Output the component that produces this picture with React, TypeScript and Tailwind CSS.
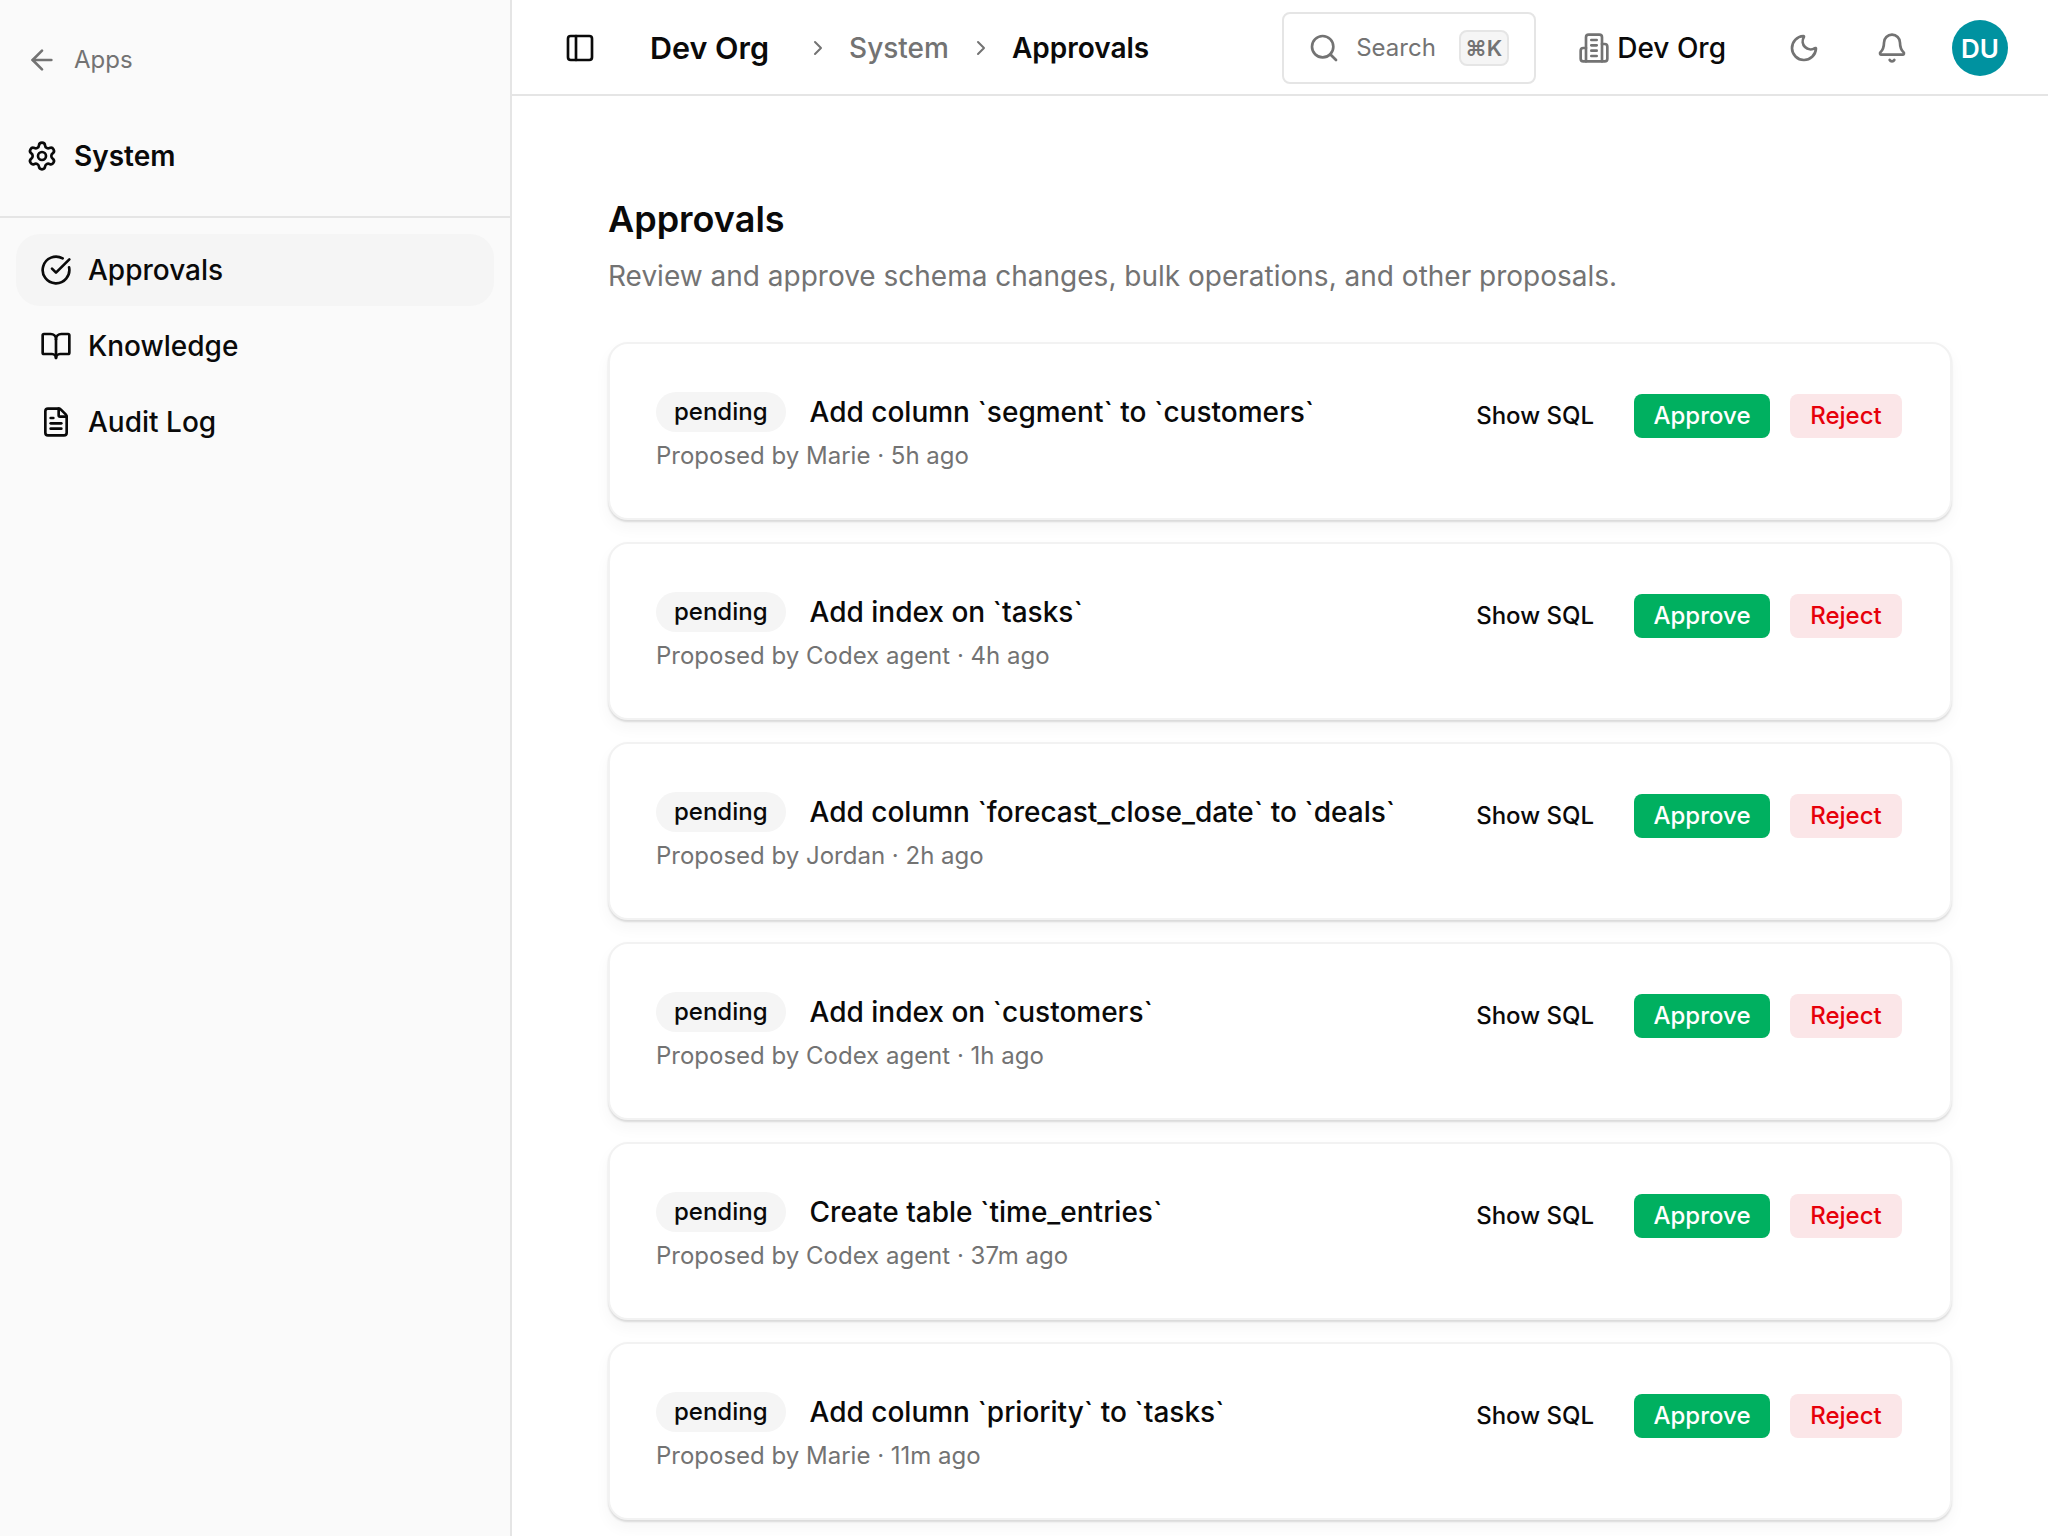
import React from 'react';
import {
  ArrowLeft,
  Bell,
  BookOpen,
  ChevronRight,
  CircleCheckBig,
  FileText,
  Moon,
  PanelLeft,
  Search,
  Settings
} from 'lucide-react';

const proposals = [
  { title: 'Add column `segment` to `customers`', meta: 'Proposed by Marie · 5h ago' },
  { title: 'Add index on `tasks`', meta: 'Proposed by Codex agent · 4h ago' },
  { title: 'Add column `forecast_close_date` to `deals`', meta: 'Proposed by Jordan · 2h ago' },
  { title: 'Add index on `customers`', meta: 'Proposed by Codex agent · 1h ago' },
  { title: 'Create table `time_entries`', meta: 'Proposed by Codex agent · 37m ago' },
  { title: 'Add column `priority` to `tasks`', meta: 'Proposed by Marie · 11m ago' }
];

const navItems = [
  { label: 'Approvals', icon: CircleCheckBig, active: true },
  { label: 'Knowledge', icon: BookOpen, active: false },
  { label: 'Audit Log', icon: FileText, active: false }
];

// older lucide building-2, the package's current one has a door instead of four bars
const OrgIcon = ({ className }: { className?: string }) => (
  <svg width="32" height="32" viewBox="0 0 24 24" fill="none" stroke="currentColor" strokeWidth="2" strokeLinecap="round" strokeLinejoin="round" className={className}>
    <path d="M6 22V4a2 2 0 0 1 2-2h8a2 2 0 0 1 2 2v18Z" />
    <path d="M6 12H4a2 2 0 0 0-2 2v6a2 2 0 0 0 2 2h2" />
    <path d="M18 9h2a2 2 0 0 1 2 2v9a2 2 0 0 1-2 2h-2" />
    <path d="M10 6h4" />
    <path d="M10 10h4" />
    <path d="M10 14h4" />
    <path d="M10 18h4" />
  </svg>
);

const Sidebar = () => (
  <aside className="w-[512px] shrink-0 h-full bg-[#fafafa] border-r-2 border-[#e5e5e5] flex flex-col">
    <div className="h-[216px] shrink-0 border-b-2 border-[#e5e5e5] box-content">
      <div className="h-[120px] flex items-center gap-[16px] pl-[26px] text-[#737373]">
        <ArrowLeft size={32} strokeWidth={2} />
        <span className="text-[24px] leading-[36px]">Apps</span>
      </div>
      <div className="h-[72px] flex items-center gap-[16px] pl-[26px] text-[#0a0a0a]">
        <Settings size={32} strokeWidth={2} />
        <span className="text-[28px] leading-[40px] font-semibold">System</span>
      </div>
    </div>
    <nav className="px-[16px] pt-[16px] flex flex-col gap-[4px]">
      {navItems.map(item => (
        <div
          key={item.label}
          className={`h-[72px] rounded-[24px] flex items-center gap-[16px] pl-[24px] text-[#0a0a0a] ${item.active ? 'bg-[#f5f5f5]' : ''}`}
        >
          <item.icon size={32} strokeWidth={2} />
          <span className="text-[28px] leading-[40px] font-medium">{item.label}</span>
        </div>
      ))}
    </nav>
  </aside>
);

const Header = () => (
  <header className="h-[96px] shrink-0 border-b-2 border-[#e5e5e5] flex items-center pl-[52px] pr-[40px] pt-[2px] bg-white">
    <PanelLeft size={32} strokeWidth={2} className="text-[#0a0a0a]" />
    <span className="ml-[54px] text-[30.5px] font-semibold text-[#0a0a0a]">Dev Org</span>
    <ChevronRight size={24} strokeWidth={2} className="ml-[37px] text-[#737373]" />
    <span className="ml-[19px] text-[28px] font-medium text-[#737373]">System</span>
    <ChevronRight size={24} strokeWidth={2} className="ml-[20px] text-[#737373]" />
    <span className="ml-[19px] text-[28px] font-semibold text-[#0a0a0a]">Approvals</span>
    <div className="ml-auto w-[254px] h-[72px] rounded-[8px] border-2 border-[#e5e5e5] flex items-center pl-[24px] text-[#737373]">
      <Search size={32} strokeWidth={2} />
      <span className="ml-[16px] text-[24px]">Search</span>
      <span className="ml-[23px] w-[50px] h-[36px] rounded-[8px] border-2 border-[#e5e5e5] bg-[#f5f5f5] flex items-center justify-center text-[22px] font-semibold">⌘K</span>
    </div>
    <OrgIcon className="ml-[42px] text-[#737373]" />
    <span className="ml-[7px] text-[28px] font-medium text-[#0a0a0a]">Dev Org</span>
    <Moon size={32} strokeWidth={2} className="ml-[62px] text-[#737373]" />
    <Bell size={32} strokeWidth={2} className="ml-[56px] text-[#737373]" />
    <div className="ml-[44px] w-[56px] h-[56px] rounded-full bg-[#0092a0] text-white flex items-center justify-center text-[26px] font-semibold">DU</div>
  </header>
);

const ProposalCard = ({ title, meta }: { title: string; meta: string }) => (
  <div className="h-[178px] shrink-0 rounded-[20px] border-2 border-[#f2f2f2] bg-white shadow-[0_2px_2px_rgba(0,0,0,0.12),0_8px_16px_rgba(0,0,0,0.04)] pl-[46px] pr-[48px] pt-[48px] flex items-start justify-between">
    <div>
      <div className="flex items-center gap-[24px]">
        <span className="h-[40px] px-[18px] rounded-full bg-[#f5f5f5] flex items-center text-[24px] font-medium text-[#0a0a0a]">pending</span>
        <span className="text-[28px] leading-[40px] font-medium text-[#0a0a0a]">{title}</span>
      </div>
      <p className="mt-[6px] text-[24px] leading-[36px] text-[#737373]">{meta}</p>
    </div>
    <div className="flex items-center gap-[20px] mt-[2px]">
      <button className="h-[44px] px-[20px] text-[24px] font-medium text-[#0a0a0a]">Show SQL</button>
      <button className="h-[44px] w-[136px] rounded-[8px] bg-[#00b060] text-[24px] font-medium text-white">Approve</button>
      <button className="h-[44px] w-[112px] rounded-[8px] bg-[#fbe6e8] text-[24px] font-medium text-[#e7000b]">Reject</button>
    </div>
  </div>
);

export default function App() {
  return (
    <div className="w-[2048px] h-[1536px] flex overflow-hidden bg-white font-['Inter',sans-serif]">
      <Sidebar />
      <main className="flex-1 min-w-0 flex flex-col">
        <Header />
        <div className="px-[96px] pt-[99px]">
          <h1 className="text-[36px] leading-[48px] font-semibold text-[#0a0a0a]">Approvals</h1>
          <p className="mt-[13px] text-[28px] leading-[40px] text-[#737373]">Review and approve schema changes, bulk operations, and other proposals.</p>
          <div className="mt-[46px] flex flex-col gap-[22px]">
            {proposals.map(p => (
              <ProposalCard key={p.title} title={p.title} meta={p.meta} />
            ))}
          </div>
        </div>
      </main>
    </div>
  );
}
